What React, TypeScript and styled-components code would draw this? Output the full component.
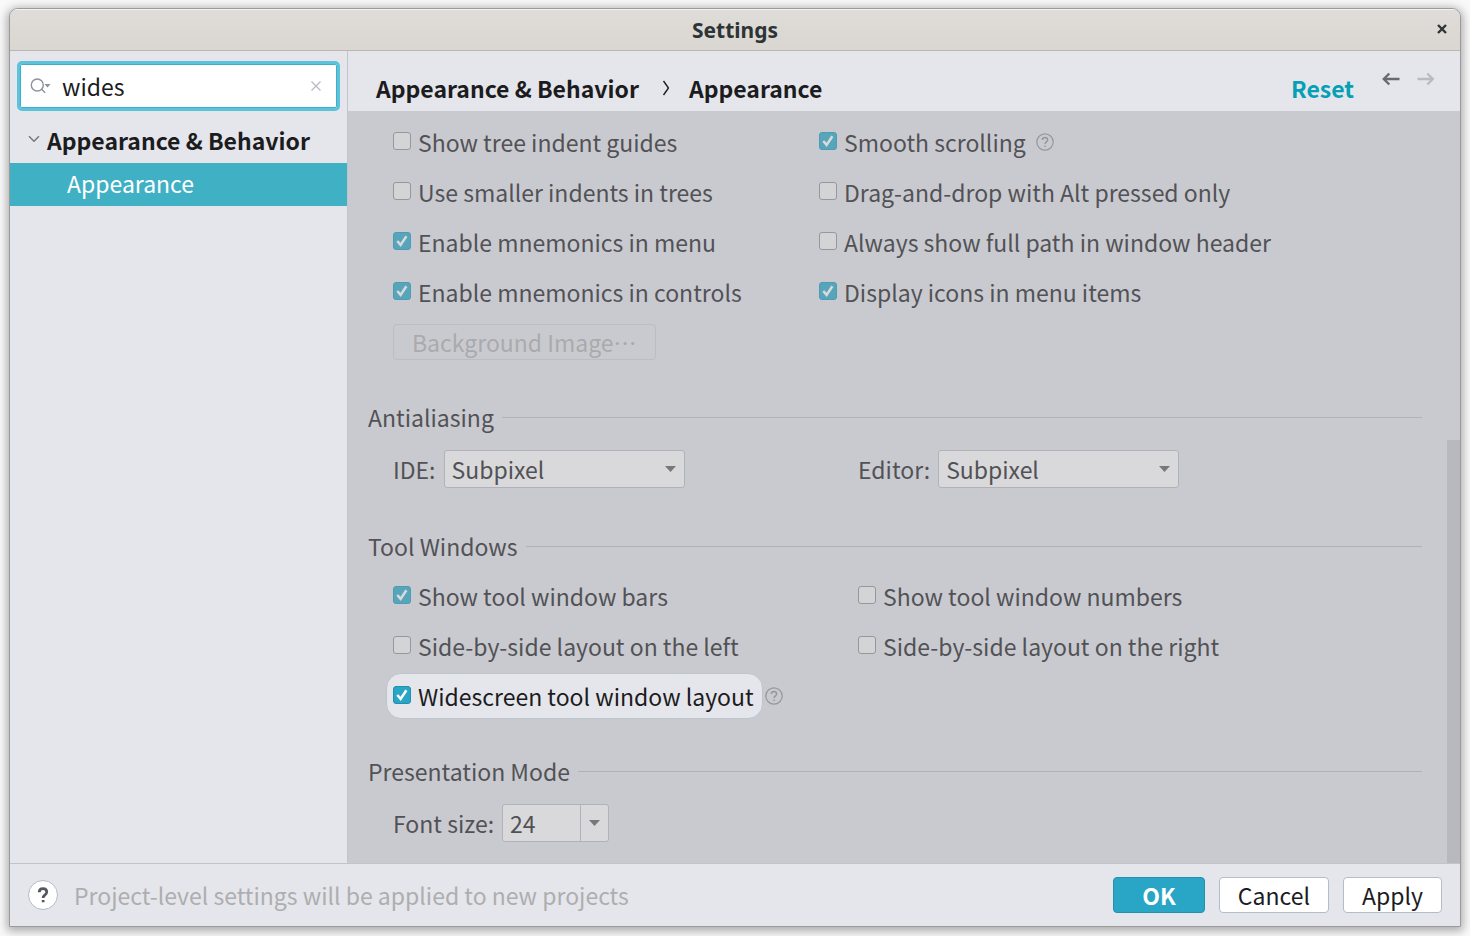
import React, { useId, useState } from "react";
import styled, { createGlobalStyle, css } from "styled-components";

const uiFont = `"Noto Sans CJK JP", "Noto Sans", sans-serif`;

const GlobalStyle = createGlobalStyle`
  *, *::before, *::after { box-sizing: border-box; }
  body {
    margin: 0;
    background: #f9f9f9;
    font-family: ${uiFont};
    font-size: 23px;
    line-height: 36px;
    color: #1c1c1e;
  }
  button, input, select { font: inherit; color: inherit; margin: 0; }
`;

const Desktop = styled.div`
  display: flex;
  min-height: 100vh;
  padding: 8px 9px 9px;
`;

const Window = styled.div`
  flex: 1;
  min-width: 0;
  display: flex;
  flex-direction: column;
  background: #e5e6eb;
  border: 1px solid #9b9b9b;
  border-radius: 9px 9px 0 0;
  box-shadow: 0 2px 10px 2px rgba(0, 0, 0, 0.32);
  overflow: hidden;
`;

const TitleBar = styled.header`
  display: grid;
  grid-template-columns: 1fr auto 1fr;
  align-items: center;
  height: 42px;
  padding: 0 12px 1px;
  border-top: 1px solid #f4f3f2;
  border-bottom: 1px solid #bdb6af;
  background: linear-gradient(#dfddd9, #dad6d2);
`;

const WindowTitle = styled.h1`
  grid-column: 2;
  margin: 0;
  font-family: "Noto Sans", "Open Sans", sans-serif;
  font-size: 21px;
  line-height: 28px;
  font-weight: 700;
  color: #2e3436;
`;

const IconButton = styled.button`
  display: flex;
  align-items: center;
  justify-content: center;
  padding: 0;
  border: 0;
  background: none;
`;

const CloseWindow = styled(IconButton)`
  justify-self: end;
  padding-bottom: 2px;
  color: #2e3436;
`;

const Body = styled.div`
  flex: 1;
  display: flex;
`;

const Sidebar = styled.nav`
  flex: 0 0 338px;
  min-width: 0;
  border-right: 1px solid #c3c4ca;
`;

const SearchBox = styled.div`
  display: flex;
  align-items: center;
  height: 50px;
  margin: 10px 7px 9px;
  padding: 0 15px 0 10px;
  background: #fff;
  border: 3px solid #5cc3db;
  border-radius: 5px;
  box-shadow: inset 0 0 0 1px #3dafcb;
`;

const SearchInput = styled.input`
  flex: 1;
  min-width: 0;
  padding: 0;
  margin-left: 10px;
  border: 0;
  outline: 0;
  background: none;
`;

const Tree = styled.ul`
  list-style: none;
  margin: 0;
  padding: 0;
`;

const TreeItem = styled.li<{ $selected?: boolean; $group?: boolean }>`
  display: flex;
  align-items: center;
  height: 43px;
  padding-bottom: 4px;
  padding-left: ${(p) => (p.$group ? 18 : 57)}px;
  gap: 7px;
  font-weight: ${(p) => (p.$group ? 700 : 400)};
  ${(p) => p.$selected && css`background: #40b1c4; color: #fff;`}
`;

const TreeLink = styled.a`
  color: inherit;
  text-decoration: none;
`;

const Main = styled.main`
  flex: 1;
  min-width: 0;
  display: flex;
  flex-direction: column;
`;

const PageHeader = styled.div`
  display: flex;
  align-items: center;
  height: 60px;
  padding: 14px 24px 0 28px;
`;

const Breadcrumb = styled.h2`
  display: flex;
  align-items: center;
  gap: 20px;
  flex: 1;
  margin: 0;
  font-size: inherit;
  font-weight: 700;
`;

const ResetLink = styled.a`
  color: #05a0b5;
  font-weight: 700;
  text-decoration: none;
`;

const History = styled.div`
  display: flex;
  gap: 15px;
  margin-left: 27px;
  padding-bottom: 18px;
`;

const ScrollArea = styled.div`
  flex: 1;
  display: flex;
  background: #c9cacf;
  color: #525256;
`;

const Options = styled.div`
  flex: 1;
  min-width: 0;
  display: flex;
  flex-direction: column;
  gap: 25px;
  padding: 6px 25px 12px 20px;
`;

const ScrollTrack = styled.div`
  display: flex;
  flex-direction: column;
  width: 13px;
  &::before {
    content: "";
    flex: 7;
  }
`;

const ScrollThumb = styled.div`
  flex: 9;
  background: #b8b9be;
`;

const Section = styled.section`
  min-width: 0;
`;

const SectionTitle = styled.h3`
  display: flex;
  align-items: center;
  gap: 8px;
  height: 50px;
  margin: 0;
  font-size: inherit;
  font-weight: 400;
  &::after {
    content: "";
    flex: 1;
    border-top: 1px solid #afb3b9;
  }
`;

const Columns = styled.div<{ $first: number }>`
  display: grid;
  grid-template-columns: ${(p) => p.$first}px 1fr;
  padding-left: 25px;
`;

const Cell = styled.div<{ $tall?: boolean; $gap?: number }>`
  display: flex;
  align-items: center;
  height: ${(p) => (p.$tall ? 54 : 50)}px;
  gap: ${(p) => p.$gap ?? 8}px;
  white-space: nowrap;
`;

const CheckLabel = styled.label<{ $spot?: boolean }>`
  display: flex;
  align-items: center;
  gap: 7px;
  ${(p) =>
    p.$spot &&
    css`
      height: 46px;
      margin-left: -7px;
      padding: 0 8px 0 6px;
      border: 1px solid #bcc5cc;
      border-radius: 15px;
      background: #e5e6eb;
      color: #1c1c1e;
    `}
`;

const CheckBox = styled.span`
  display: grid;
  width: 18px;
  height: 18px;
  margin-bottom: 2px;
  & > * { grid-area: 1 / 1; }
  & > svg { pointer-events: none; }
`;

const CheckInput = styled.input<{ $spot?: boolean }>`
  appearance: none;
  width: 18px;
  height: 18px;
  border: 1px solid #96979b;
  border-radius: 3px;
  background: #d4d4d6;
  &:checked {
    border-color: ${(p) => (p.$spot ? "#238fad" : "#4e9cb1")};
    background: ${(p) => (p.$spot ? "#29a5c5" : "#56a5ba")};
  }
`;

const FieldLabel = styled.label``;

const SelectBox = styled.span`
  display: grid;
  align-items: center;
  & > * { grid-area: 1 / 1; }
  & > svg { justify-self: end; margin-right: 9px; pointer-events: none; }
`;

const Select = styled.select`
  appearance: none;
  width: 241px;
  height: 38px;
  padding: 0 7px;
  border: 1px solid #afb3b9;
  border-radius: 3px;
  background: #d9d9db;
`;

const Combo = styled.span`
  display: flex;
  width: 107px;
  height: 38px;
  border: 1px solid #afb3b9;
  border-radius: 3px;
  background: #d9d9db;
`;

const ComboInput = styled.input`
  flex: 1;
  min-width: 0;
  padding: 0 7px;
  border: 0;
  background: none;
`;

const ComboButton = styled(IconButton)`
  width: 28px;
  border-left: 1px solid #afb3b9;
`;

const Button = styled.button<{ $primary?: boolean }>`
  height: 36px;
  padding: 0 18px;
  line-height: 34px;
  border: 1px solid #b4bcc9;
  border-radius: 4px;
  background: #fff;
  ${(p) =>
    p.$primary &&
    css`
      padding: 0 28px;
      border-color: #2390ae;
      background: #29a5c5;
      color: #fff;
      font-weight: 700;
    `}
  &:disabled {
    border-color: #bbbdc2;
    background: none;
    color: #a9aaad;
  }
`;

const CenteredDots = styled.span`
  font-family: "Noto Sans CJK TC", sans-serif;
`;

const Footer = styled.footer`
  display: flex;
  align-items: center;
  gap: 14px;
  height: 63px;
  padding: 0 18px;
  border-top: 1px solid #c3c4ca;
`;

const HelpButton = styled(IconButton)`
  width: 30px;
  height: 30px;
  margin-right: 2px;
  border: 1px solid #b4bcc9;
  border-radius: 50%;
  background: #fff;
  color: #54585f;
`;

const Note = styled.p`
  flex: 1;
  margin: 0;
  color: #adaeb0;
`;

const Triangle = () => (
  <svg width="11" height="6" viewBox="0 0 11 6" aria-hidden="true">
    <path d="M0 0h11L5.5 6z" fill="#77787a" />
  </svg>
);

const Tick = ({ color }: { color: string }) => (
  <svg width="18" height="18" viewBox="0 0 18 18" fill="none" stroke={color} strokeWidth="2.5" aria-hidden="true">
    <path d="M4.3 9 7.6 12.9 13.4 4.2" />
  </svg>
);

const QuestionPath = () => (
  <path d="M6.4 7.1c0-1.5 1.1-2.5 2.6-2.5s2.6.9 2.6 2.3c0 2.1-2.5 2-2.5 4.2M9.1 12.4v1.7" />
);

const HelpMark = () => (
  <svg width="18" height="18" viewBox="0 0 18 18" fill="none" stroke="#96979b" strokeWidth="1.5" role="img" aria-label="Help">
    <circle cx="9" cy="9" r="8.2" strokeWidth="1.2" />
    <QuestionPath />
  </svg>
);

type CheckProps = { label: string; checked?: boolean; spot?: boolean; help?: boolean };

function Check({ label, checked = false, spot, help }: CheckProps) {
  const [on, setOn] = useState(checked);
  return (
    <Cell $gap={spot ? 2 : 10}>
      <CheckLabel $spot={spot}>
        <CheckBox>
          <CheckInput type="checkbox" $spot={spot} checked={on} onChange={(e) => setOn(e.target.checked)} />
          {on && <Tick color={spot ? "#fff" : "#dadadc"} />}
        </CheckBox>
        {label}
      </CheckLabel>
      {help && <HelpMark />}
    </Cell>
  );
}

function SelectField({ label }: { label: string }) {
  const id = useId();
  return (
    <Cell $tall>
      <FieldLabel htmlFor={id}>{label}</FieldLabel>
      <SelectBox>
        <Select id={id} defaultValue="Subpixel">
          <option>Subpixel</option>
          <option>Greyscale</option>
          <option>No antialiasing</option>
        </Select>
        <Triangle />
      </SelectBox>
    </Cell>
  );
}

export default function App() {
  const [query, setQuery] = useState("wides");
  return (
    <>
      <GlobalStyle />
      <Desktop>
        <Window>
          <TitleBar>
            <WindowTitle>Settings</WindowTitle>
            <CloseWindow aria-label="Close">
              <svg width="12" height="12" viewBox="0 0 12 12" stroke="currentColor" strokeWidth="2.4">
                <path d="M2 2l8 8M10 2l-8 8" />
              </svg>
            </CloseWindow>
          </TitleBar>
          <Body>
            <Sidebar aria-label="Settings pages">
              <SearchBox>
                <svg width="22" height="18" viewBox="0 0 22 18" fill="none" stroke="#8d929b" strokeWidth="1.4" aria-hidden="true">
                  <circle cx="7.3" cy="8" r="6" />
                  <path d="M11.6 12.2l3.6 3.6" />
                  <path d="M14.5 7h6l-3 3.6z" fill="#8d929b" stroke="none" />
                </svg>
                <SearchInput aria-label="Search settings" value={query} onChange={(e) => setQuery(e.target.value)} />
                <IconButton aria-label="Clear search" onClick={() => setQuery("")}>
                  <svg width="12" height="12" viewBox="0 0 12 12" stroke="#b9bdc6" strokeWidth="1.4">
                    <path d="M1.5 1.5l9 9M10.5 1.5l-9 9" />
                  </svg>
                </IconButton>
              </SearchBox>
              <Tree>
                <TreeItem $group>
                  <svg width="12" height="10" viewBox="0 0 12 10" fill="none" stroke="#76787d" strokeWidth="1.5" aria-hidden="true">
                    <path d="M1 1.2l5 5 5-5" />
                  </svg>
                  <TreeLink href="#behavior">Appearance &amp; Behavior</TreeLink>
                </TreeItem>
                <TreeItem $selected>
                  <TreeLink href="#appearance">Appearance</TreeLink>
                </TreeItem>
              </Tree>
            </Sidebar>
            <Main>
              <PageHeader>
                <Breadcrumb>
                  <span>Appearance &amp; Behavior</span>
                  <svg width="10" height="16" viewBox="0 0 10 16" fill="none" stroke="#1c1c1e" strokeWidth="1.4" aria-hidden="true">
                    <path d="M4.5 1l5 7-5 7" />
                  </svg>
                  <span>Appearance</span>
                </Breadcrumb>
                <ResetLink href="#reset">Reset</ResetLink>
                <History>
                  <IconButton aria-label="Back">
                    <svg width="20" height="14" viewBox="0 0 20 14" fill="none" stroke="#676a72" strokeWidth="2.4">
                      <path d="M18.5 7H3M8.3 1.5L2.8 7l5.5 5.5" />
                    </svg>
                  </IconButton>
                  <IconButton aria-label="Forward" disabled>
                    <svg width="20" height="14" viewBox="0 0 20 14" fill="none" stroke="#babbbf" strokeWidth="2.4">
                      <path d="M1.5 7h15.5M11.3 1.5L16.8 7l-5.5 5.5" />
                    </svg>
                  </IconButton>
                </History>
              </PageHeader>
              <ScrollArea>
                <Options>
                  <Section>
                    <Columns $first={426}>
                      <Check label="Show tree indent guides" />
                      <Check label="Smooth scrolling" checked help />
                      <Check label="Use smaller indents in trees" />
                      <Check label="Drag-and-drop with Alt pressed only" />
                      <Check label="Enable mnemonics in menu" checked />
                      <Check label="Always show full path in window header" />
                      <Check label="Enable mnemonics in controls" checked />
                      <Check label="Display icons in menu items" checked />
                      <Cell>
                        <Button disabled>
                          Background Image<CenteredDots lang="zh-Hant">…</CenteredDots>
                        </Button>
                      </Cell>
                    </Columns>
                  </Section>
                  <Section>
                    <SectionTitle>Antialiasing</SectionTitle>
                    <Columns $first={465}>
                      <SelectField label="IDE:" />
                      <SelectField label="Editor:" />
                    </Columns>
                  </Section>
                  <Section>
                    <SectionTitle>Tool Windows</SectionTitle>
                    <Columns $first={465}>
                      <Check label="Show tool window bars" checked />
                      <Check label="Show tool window numbers" />
                      <Check label="Side-by-side layout on the left" />
                      <Check label="Side-by-side layout on the right" />
                      <Check label="Widescreen tool window layout" checked spot help />
                    </Columns>
                  </Section>
                  <Section>
                    <SectionTitle>Presentation Mode</SectionTitle>
                    <Columns $first={465}>
                      <Cell $tall>
                        <FieldLabel htmlFor="font-size">Font size:</FieldLabel>
                        <Combo>
                          <ComboInput id="font-size" defaultValue="24" />
                          <ComboButton aria-label="Choose font size">
                            <Triangle />
                          </ComboButton>
                        </Combo>
                      </Cell>
                    </Columns>
                  </Section>
                </Options>
                <ScrollTrack>
                  <ScrollThumb />
                </ScrollTrack>
              </ScrollArea>
            </Main>
          </Body>
          <Footer>
            <HelpButton aria-label="Help">
              <svg width="26" height="26" viewBox="0 0 18 18" fill="none" stroke="currentColor" strokeWidth="1.9">
                <QuestionPath />
              </svg>
            </HelpButton>
            <Note>Project-level settings will be applied to new projects</Note>
            <Button $primary>OK</Button>
            <Button>Cancel</Button>
            <Button>Apply</Button>
          </Footer>
        </Window>
      </Desktop>
    </>
  );
}
